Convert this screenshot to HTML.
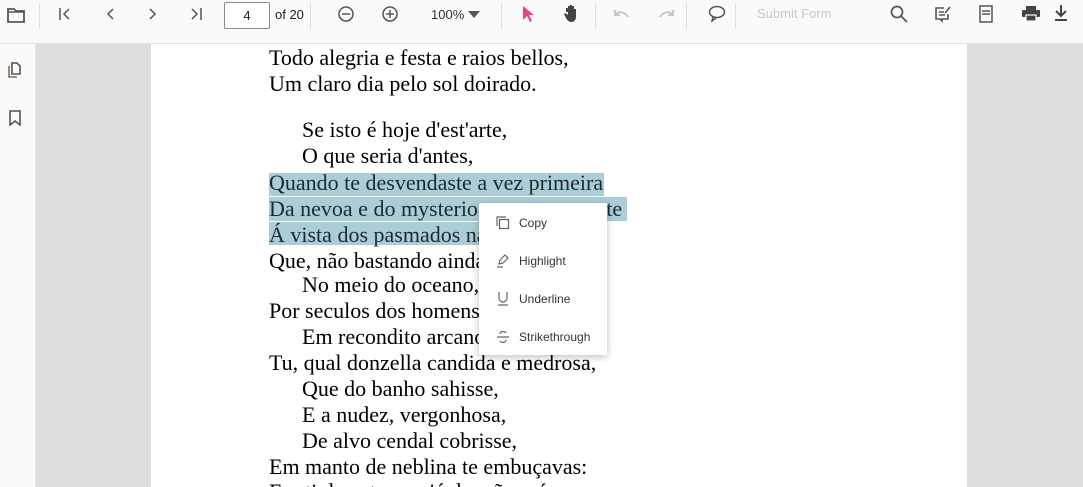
<!DOCTYPE html>
<html><head><meta charset="utf-8"><style>
*{margin:0;padding:0;box-sizing:border-box}
html,body{width:1083px;height:487px;overflow:hidden}
body{background:#dedede;font-family:"Liberation Sans",sans-serif;position:relative}
.wrap{position:absolute;left:0;top:0;width:1083px;height:487px;overflow:hidden}
.tb{position:absolute;left:0;top:0;width:1083px;height:44px;background:#fafafa;border-bottom:1px solid #e0e0e0}
.ic{position:absolute;top:14px}
.sep{position:absolute;top:3px;width:1px;height:26px;background:#e0e0e0}
.side{position:absolute;left:0;top:44px;width:36px;height:443px;background:#fafafa;border-right:1px solid #e6e6e6}
.page{position:absolute;left:151px;top:44px;width:816px;height:443px;background:#fff}
.l{position:absolute;font-family:"Liberation Serif",serif;font-size:22px;color:#000;white-space:nowrap;line-height:24px}
.hl{position:absolute;background:#abcdd7}
.menu{position:absolute;left:479px;top:203px;width:128px;height:152px;background:#fff;box-shadow:0 2px 8px rgba(0,0,0,.25);border-radius:2px}
.mi{position:absolute;left:40px;font-size:12px;color:#333}
</style></head><body><div class="wrap">
<div class="tb">
<svg class="ic" style="left:7px;top:7px" width="18" height="16" viewBox="0 0 18 16"><path d="M1 2h6l2 2h8v11H1z" fill="none" stroke="#555" stroke-width="1.8"/><path d="M1 5h16" stroke="#555" stroke-width="1.5"/></svg>
<div class="sep" style="left:39px"></div>
<svg class="ic" style="left:58px;top:7px" width="14" height="14" viewBox="0 0 14 14"><path d="M2 1v12M11 2L6 7l5 5" fill="none" stroke="#555" stroke-width="1.5"/></svg>
<svg class="ic" style="left:103px;top:7px" width="14" height="14" viewBox="0 0 14 14"><path d="M10 2L5 7l5 5" fill="none" stroke="#555" stroke-width="1.5"/></svg>
<svg class="ic" style="left:146px;top:7px" width="14" height="14" viewBox="0 0 14 14"><path d="M4 2l5 5-5 5" fill="none" stroke="#555" stroke-width="1.5"/></svg>
<svg class="ic" style="left:189px;top:7px" width="14" height="14" viewBox="0 0 14 14"><path d="M3 2l5 5-5 5M12 1v12" fill="none" stroke="#555" stroke-width="1.5"/></svg>
<div style="position:absolute;left:224px;top:2px;width:46px;height:27px;border:1px solid #8a8a8a;border-radius:2px;background:#fff;font-size:13px;text-align:center;line-height:25px;color:#222">4</div>
<div style="position:absolute;left:275px;top:7px;font-size:13px;color:#222">of 20</div>
<div class="sep" style="left:310px"></div>
<svg class="ic" style="left:337px;top:5px" width="18" height="18" viewBox="0 0 18 18"><circle cx="9" cy="9" r="7" fill="none" stroke="#555" stroke-width="1.5"/><path d="M5 9h8" stroke="#555" stroke-width="1.5"/></svg>
<svg class="ic" style="left:381px;top:5px" width="18" height="18" viewBox="0 0 18 18"><circle cx="9" cy="9" r="7" fill="none" stroke="#555" stroke-width="1.5"/><path d="M5 9h8M9 5v8" stroke="#555" stroke-width="1.5"/></svg>
<div style="position:absolute;left:431px;top:7px;font-size:13px;color:#333">100%</div>
<svg class="ic" style="left:468px;top:11px" width="12" height="7"><path d="M0 0h12L6 7z" fill="#555"/></svg>
<div class="sep" style="left:501px"></div>
<svg class="ic" style="left:520px;top:5px" width="16" height="18" viewBox="0 0 16 18"><path d="M3 1l11 9h-5l3 6-2 1-3-6-4 4z" fill="#e8457f"/></svg>
<svg class="ic" style="left:563px;top:3px" width="18" height="20" viewBox="0 0 18 20"><path d="M3 9V5h2v4V3h2v6V2h2v7V3h2v7V6h2v8c0 3-2 5-5 5H8c-2 0-4-2-5-4L1 11l1-1 3 2V9" fill="#444"/></svg>
<div class="sep" style="left:595px"></div>
<svg class="ic" style="left:613px;top:8px" width="18" height="12" viewBox="0 0 18 12"><path d="M2 2v5h5M2 7c3-4 9-4 13 2" fill="none" stroke="#c4c4c4" stroke-width="1.8"/></svg>
<svg class="ic" style="left:657px;top:8px" width="18" height="12" viewBox="0 0 18 12"><path d="M16 2v5h-5M16 7c-3-4-9-4-13 2" fill="none" stroke="#c4c4c4" stroke-width="1.8"/></svg>
<div class="sep" style="left:686px"></div>
<svg class="ic" style="left:708px;top:5px" width="18" height="17" viewBox="0 0 18 17"><ellipse cx="9" cy="7" rx="7.5" ry="5.5" fill="none" stroke="#555" stroke-width="1.5"/><path d="M5 12l-1 4 4-3" fill="none" stroke="#555" stroke-width="1.5"/></svg>
<div class="sep" style="left:735px"></div>
<div style="position:absolute;left:757px;top:6px;font-size:13px;color:#c8c8c8">Submit Form</div>
<svg class="ic" style="left:890px;top:5px" width="18" height="18" viewBox="0 0 18 18"><circle cx="7" cy="7" r="5.5" fill="none" stroke="#555" stroke-width="1.7"/><path d="M11 11l6 6" stroke="#555" stroke-width="1.8"/></svg>
<svg class="ic" style="left:934px;top:5px" width="18" height="18" viewBox="0 0 18 18"><path d="M10 3H2v11h4l2 2v-2h6V9" fill="none" stroke="#555" stroke-width="1.6"/><path d="M5 7h5M5 10h6" stroke="#555" stroke-width="1.5"/><path d="M11 8l5-6" stroke="#555" stroke-width="1.6"/></svg>
<svg class="ic" style="left:979px;top:5px" width="14" height="18" viewBox="0 0 14 18"><rect x="1" y="1" width="12" height="16" fill="none" stroke="#555" stroke-width="1.5"/><path d="M3 6h8M3 9h8" stroke="#555" stroke-width="1.5"/></svg>
<svg class="ic" style="left:1022px;top:6px" width="18" height="16" viewBox="0 0 18 16"><rect x="4" y="0" width="10" height="4" fill="#444"/><rect x="0" y="4" width="18" height="7" rx="1" fill="#444"/><rect x="4" y="9" width="10" height="6" fill="#444" stroke="#fafafa" stroke-width="1.2"/></svg>
<svg class="ic" style="left:1054px;top:4px" width="14" height="18" viewBox="0 0 14 18"><path d="M7 1v10M2 7l5 5 5-5" fill="none" stroke="#444" stroke-width="2"/><path d="M1 16h12" stroke="#444" stroke-width="2"/></svg>
</div>
<div class="side">
<svg style="position:absolute;left:8px;top:18px" width="14" height="16" viewBox="0 0 14 16"><path d="M4 1h5l3 3v8H4z" fill="none" stroke="#555" stroke-width="1.6"/><path d="M1 4v11h8" fill="none" stroke="#8a6a5a" stroke-width="1.6"/></svg>
<svg style="position:absolute;left:8px;top:66px" width="14" height="16" viewBox="0 0 14 16"><path d="M2 1h10v14l-5-4-5 4z" fill="none" stroke="#555" stroke-width="1.6"/></svg>
</div>
<div class="page"></div>
<div class="hl" style="left:269px;top:173px;width:335px;height:23px"></div>
<div class="hl" style="left:269px;top:197px;width:358px;height:24px"></div>
<div class="hl" style="left:269px;top:222px;width:230px;height:23px"></div>
<div class="l" style="left:269px;top:46px">Todo alegria e festa e raios bellos,</div>
<div class="l" style="left:269px;top:72px">Um claro dia pelo sol doirado.</div>
<div class="l" style="left:302px;top:118px">Se isto é hoje d'est'arte,</div>
<div class="l" style="left:302px;top:144px">O que seria d'antes,</div>
<div class="l" style="left:269px;top:171px;color:#1c2a30">Quando te desvendaste a vez primeira</div>
<div class="l" style="left:269px;top:197px;color:#1c2a30">Da nevoa e do mysterio com que a sorte</div>
<div class="l" style="left:269px;top:223px;color:#1c2a30">Á vista dos pasmados navegantes</div>
<div class="l" style="left:269px;top:249px">Que, não bastando ainda a longa rota</div>
<div class="l" style="left:302px;top:273px">No meio do oceano, perdido</div>
<div class="l" style="left:269px;top:299px">Por seculos dos homens esquecido</div>
<div class="l" style="left:302px;top:325px">Em recondito arcano,</div>
<div class="l" style="left:269px;top:351px">Tu, qual donzella candida e medrosa,</div>
<div class="l" style="left:302px;top:377px">Que do banho sahisse,</div>
<div class="l" style="left:302px;top:403px">E a nudez, vergonhosa,</div>
<div class="l" style="left:302px;top:429px">De alvo cendal cobrisse,</div>
<div class="l" style="left:269px;top:455px">Em manto de neblina te embuçavas:</div>
<div class="l" style="left:269px;top:480px">Em ti da natureza já da mão caía</div>
<div class="menu">
<svg style="position:absolute;left:17px;top:13px" width="14" height="14" viewBox="0 0 14 14"><path d="M1 10V1h9" fill="none" stroke="#666" stroke-width="1.2"/><rect x="3.5" y="3.5" width="9" height="9" fill="none" stroke="#666" stroke-width="1.3"/></svg>
<div class="mi" style="top:13px">Copy</div>
<svg style="position:absolute;left:17px;top:51px" width="14" height="14" viewBox="0 0 14 14"><path d="M3 10l1-4 5-5 3 3-5 5zM1 13h6" fill="none" stroke="#666" stroke-width="1.2"/></svg>
<div class="mi" style="top:51px">Highlight</div>
<svg style="position:absolute;left:17px;top:88px" width="14" height="15" viewBox="0 0 14 15"><path d="M3 1v6a4 4 0 008 0V1M2 14h10" fill="none" stroke="#666" stroke-width="1.2"/></svg>
<div class="mi" style="top:89px">Underline</div>
<svg style="position:absolute;left:17px;top:127px" width="14" height="14" viewBox="0 0 14 14"><path d="M10 3c-1-2-6-2-6 1M4 11c1 2 6 2 6-1M1 7h12" fill="none" stroke="#666" stroke-width="1.2"/></svg>
<div class="mi" style="top:127px">Strikethrough</div>
</div>
</div></body></html>
